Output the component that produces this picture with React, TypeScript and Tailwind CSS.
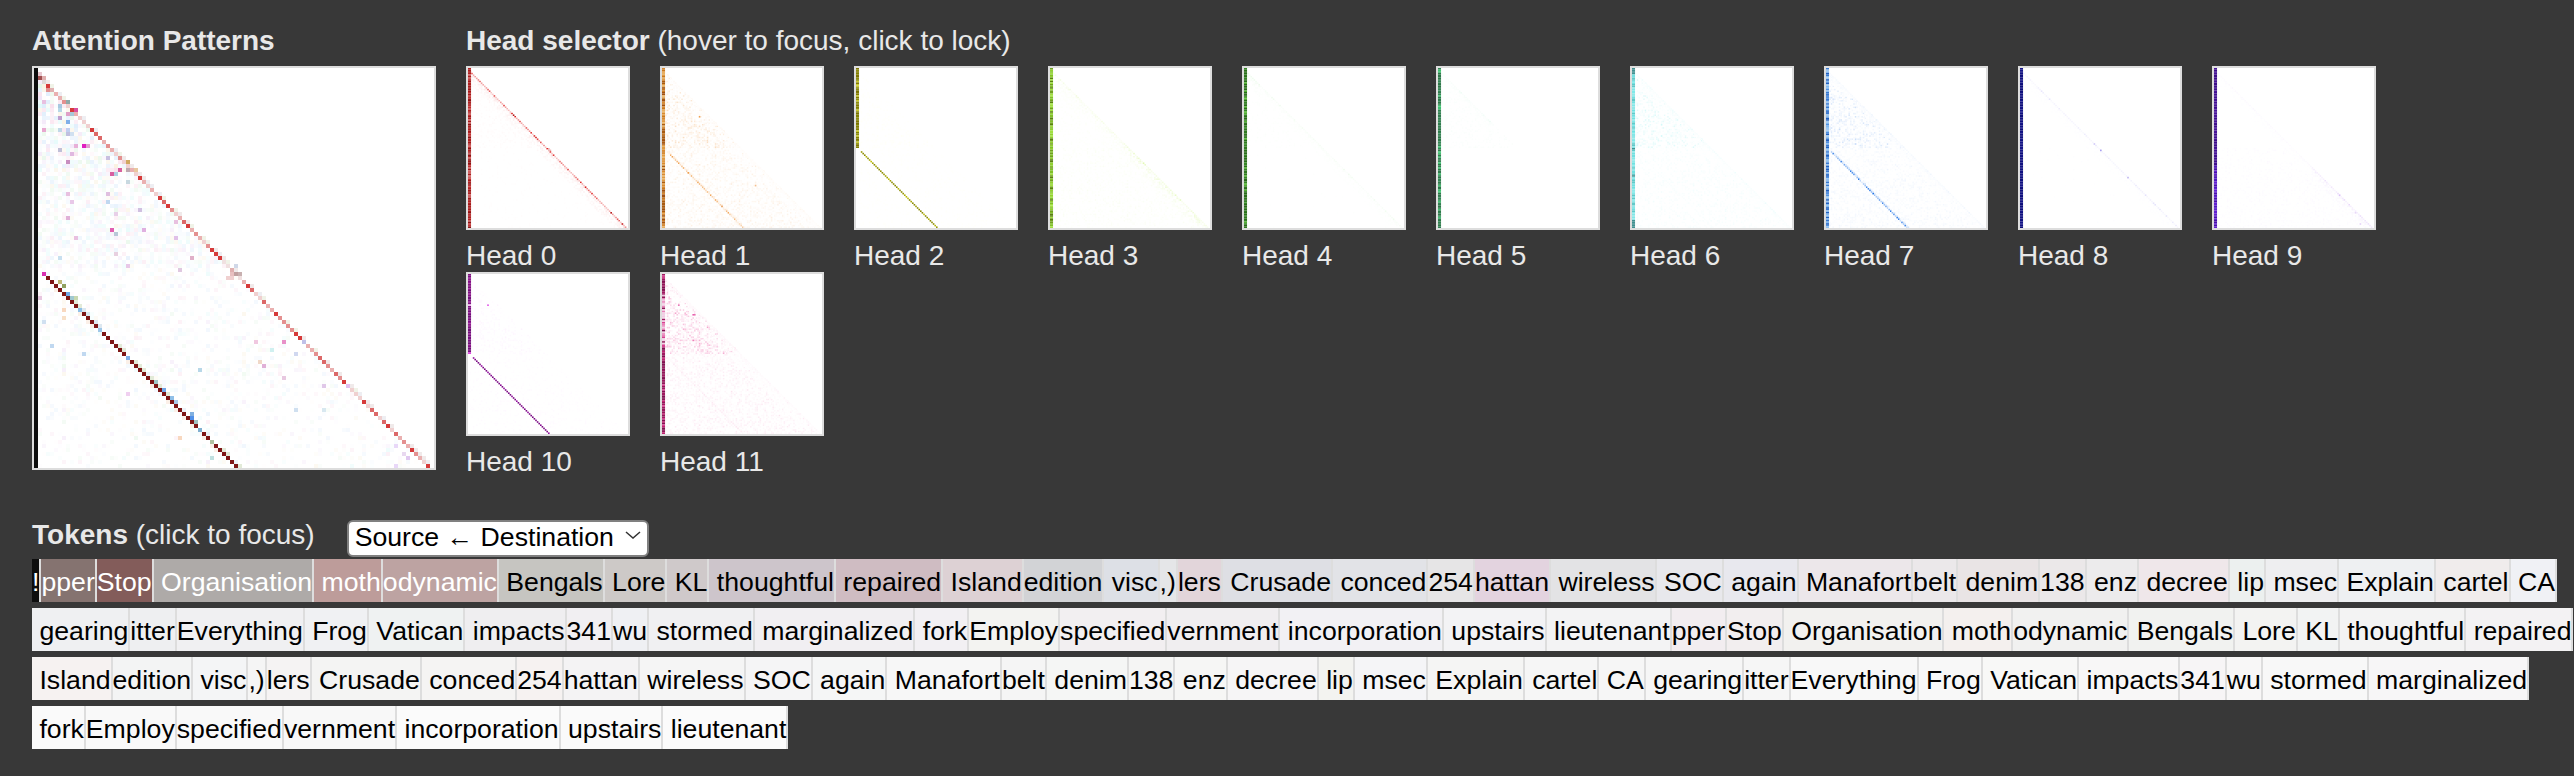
import React from "react";

function rng(seed: number) {
  let a = seed >>> 0;
  return () => {
    a = (a + 0x6d2b79f5) >>> 0;
    let t = a;
    t = Math.imul(t ^ (t >>> 15), t | 1);
    t ^= t + Math.imul(t ^ (t >>> 7), t | 61);
    return ((t ^ (t >>> 14)) >>> 0) / 4294967296;
  };
}

type Cell = [number, number, string];

const STRONG = [3, 9, 14, 26, 31, 33, 38, 44, 45, 46, 53, 60, 65, 66, 77, 82, 88, 94, 98];

const NOTABLE: Cell[] = [
  [1, 1, "#e8c8d0"], [1, 2, "#a05050"], [2, 2, "#e0b0b0"], [2, 3, "#e0d8d8"], [3, 5, "#e09090"], [4, 5, "#e0b0b0"],
  [8, 8, "#90a8a8"], [2, 8, "#e8c0e0"], [2, 15, "#e8a8d0"], [6, 9, "#a8c8e0"], [6, 10, "#b8d8e8"], [8, 11, "#e0a0c8"],
  [9, 11, "#a8c8d8"], [10, 10, "#d850a0"], [6, 12, "#c0a0d0"], [8, 13, "#80b0e8"], [6, 15, "#c0d8e8"], [8, 15, "#c0d0f0"],
  [8, 16, "#c0c0e0"], [9, 16, "#d0e0f0"], [12, 19, "#e020c0"], [13, 19, "#e0a0d0"], [10, 19, "#e8b0d8"], [6, 20, "#c0c0d8"],
  [9, 21, "#e0b8e0"], [18, 22, "#c8c0e0"], [8, 23, "#c88ec0"], [23, 23, "#d0a860"], [23, 25, "#c0a8b0"], [25, 25, "#e8c8a0"],
  [21, 25, "#d860a0"], [19, 26, "#d860a0"], [20, 26, "#b0d0e0"], [23, 28, "#c8d8e0"], [8, 31, "#e8c0e0"], [9, 33, "#e8c8e8"],
  [18, 31, "#e0c0e0"], [18, 33, "#c0d8f0"], [26, 35, "#d0c0e0"], [8, 37, "#e0b0d8"], [20, 36, "#e8d0e8"], [35, 38, "#e8c0e0"],
  [19, 40, "#e060b0"], [20, 41, "#b8c8d8"], [27, 40, "#e0b0e0"], [10, 42, "#e8c0e0"], [35, 42, "#e0c0e8"], [6, 47, "#c8e0f0"],
  [20, 46, "#e8d0e0"], [39, 47, "#e0b0c8"], [23, 49, "#e8c8e8"], [36, 50, "#e0c8e0"], [49, 50, "#e0b0b0"], [50, 51, "#c0a0a0"],
  [49, 51, "#e8c0c0"], [51, 51, "#c8b0b0"], [48, 52, "#f0d0d0"], [49, 52, "#f0d0d0"], [50, 49, "#d0d8e8"], [1, 57, "#e8c8e0"],
  [7, 60, "#f8d8c0"], [7, 62, "#f8e0c8"], [2, 63, "#d0e0f0"], [4, 69, "#c0d8f0"], [12, 71, "#c0d8f0"], [55, 68, "#f0c8e0"],
  [62, 68, "#e890c8"], [67, 68, "#c0c0e8"], [65, 71, "#d0d8f0"], [59, 70, "#d0f0f0"], [57, 74, "#e0b0d8"], [56, 73, "#f0d8c8"],
  [41, 75, "#b8d8e8"], [62, 77, "#e8c8e0"], [23, 81, "#f0d0f0"], [65, 85, "#d0e0f0"], [72, 85, "#d8e8f0"], [36, 92, "#f8d8c0"],
  [44, 97, "#c0e0e0"], [72, 79, "#e0c8e8"], [93, 97, "#e0c8f0"], [90, 99, "#e8d8f8"], [90, 94, "#e8d8f8"], [92, 96, "#e8d8f0"],
  [78, 79, "#e0c0f0"], [2, 51, "#d830b0"], [8, 56, "#70a8e8"], [9, 57, "#a0c8d0"], [11, 60, "#90c0e8"], [16, 65, "#a0c8e8"],
  [23, 72, "#80b0e8"], [32, 80, "#70a8e8"], [34, 82, "#90c0e8"], [39, 87, "#5090e8"], [39, 86, "#80b0e0"], [40, 88, "#a0c0c0"],
  [41, 90, "#80b0d0"], [35, 83, "#a8c8e8"], [7, 54, "#90a060"], [6, 53, "#c0b878"], [44, 93, "#b0c0a0"], [30, 78, "#a0c8c8"],
  [10, 57, "#c8d8b0"],
];

function bigCells(): Cell[] {
  const R = rng(11);
  const out: Cell[] = [];
  const tints = [[330, 70], [210, 80], [210, 80], [130, 50], [40, 70], [280, 55], [180, 70]];
  for (let r = 1; r < 100; r++) {
    for (let c = 1; c < r; c++) {
      const upper = r < 50;
      let d = upper ? 0.8 : 0.4;
      if (!upper && r > 85) d = 0.28;
      if (R() > d) continue;
      const t = tints[Math.floor(R() * tints.length)];
      let amp = upper ? 3.6 + 6 * Math.max(0, 1 - r / 30) : 2.4;
      if (r > 50 && (c % 9 === 7 || c === 36)) amp += 1.5;
      if (c === 23 || c === 20) amp += upper ? 2 : 0;
      const l = 100 - R() * amp;
      out.push([c, r, `hsl(${t[0]} ${t[1]}% ${l.toFixed(1)}%)`]);
    }
  }
  for (let c = 1; c < 99; c++) {
    const v = R();
    const col = STRONG.includes(c)
      ? "#d63a3a"
      : c > 46 && c < 52
        ? "#f0e0e0"
        : v < 0.35
          ? "#f0d0d0"
          : v < 0.6
            ? "#eab0b0"
            : v < 0.85
              ? "#e49090"
              : "#dc6868";
    out.push([c, c + 1, col]);
    const w = R();
    if (w < 0.55) out.push([c + 1, c + 1, w < 0.2 ? "#f0eaea" : w < 0.4 ? "#f0f3e8" : "#eeeef2"]);
  }
  for (let c = 3; c <= 50; c++) {
    out.push([c, c + 49, "#7e1616"]);
    const w = R();
    if (w < 0.65) out.push([c + 1, c + 49, w < 0.3 ? "#e2ead8" : w < 0.5 ? "#ecf2f8" : "#dde8f0"]);
    if (R() < 0.25) out.push([c - 1, c + 49, "#fbf0e8"]);
  }
  out.push(...NOTABLE);
  for (let r = 0; r < 100; r++) out.push([0, r, "#0d0d0d"]);
  return out;
}

type HeadSpec = {
  hue: number;
  sat: number;
  col: (r: number, R: () => number) => string;
  cut?: boolean;
  main: number;
  mainWidth: number;
  second: number;
  upper: number;
  lower: number;
  mainFade?: (c: number) => number;
  extras?: Cell[];
};

const pick = (R: () => number, list: string[]) => list[Math.floor(R() * list.length)];

const HEADS: HeadSpec[] = [
  { hue: 0, sat: 75, main: 0.5, mainWidth: 0.12, second: 0, upper: 0.008, lower: 0.003,
    col: (_, R) => pick(R, ["#a01818", "#b02020", "#8a1212", "#c03030", "#a81c1c", "#d06060"]),
    extras: [[50, 50, "#e8a8a8"], [51, 51, "#e8b0b0"], [50, 51, "#ecb8b8"], [89, 90, "#b82020"], [96, 97, "#c83030"]] },
  { hue: 30, sat: 85, main: 0.02, mainWidth: 0.015, second: 0.36, upper: 0.07, lower: 0.035,
    col: (_, R) => pick(R, ["#a85a10", "#e09a40", "#c87820", "#e8b060", "#a05010", "#d88a30"]),
    extras: [[23, 30, "#f0a050"], [16, 65, "#f0a050"], [58, 73, "#f4c090"], [37, 86, "#e8a060"]] },
  { hue: 60, sat: 95, main: 0, mainWidth: 0.004, second: 1, upper: 0.01, lower: 0.006, cut: true,
    col: (_, R) => pick(R, ["#808000", "#807800", "#8c8c10", "#c8c830", "#787000"]) },
  { hue: 80, sat: 85, main: 0.08, mainWidth: 0.1, second: 0, upper: 0.008, lower: 0.012,
    col: (_, R) => pick(R, ["#70a020", "#90d030", "#a0e040", "#588010", "#80c028"]),
    mainFade: (c) => (c > 45 ? 1.5 : 0.7) },
  { hue: 115, sat: 70, main: 0.03, mainWidth: 0.02, second: 0, upper: 0.004, lower: 0.002,
    col: (_, R) => pick(R, ["#307820", "#287018", "#50b030", "#358525", "#2a6a1a"]),
    mainFade: (c) => (c < 10 ? 2.5 : 1) },
  { hue: 150, sat: 65, main: 0.015, mainWidth: 0.012, second: 0, upper: 0.008, lower: 0.001,
    col: (_, R) => pick(R, ["#308050", "#2c7848", "#40c070", "#307a4c", "#358555"]),
    mainFade: (c) => (c < 35 ? 2 : 0) },
  { hue: 180, sat: 75, main: 0.03, mainWidth: 0.02, second: 0.015, upper: 0.05, lower: 0.014,
    col: (r, R) => (r < 4 || r > 94 || r === 67 || r === 50 ? "#409090" : pick(R, ["#70e0e0", "#80e8e8", "#60c8c8", "#90e8e8"])) },
  { hue: 215, sat: 80, main: 0.03, mainWidth: 0.02, second: 0.5, upper: 0.06, lower: 0.018,
    col: (_, R) => pick(R, ["#2060c0", "#80b8f0", "#5090e0", "#a0c8f0", "#3878d0", "#90c0f0"]) },
  { hue: 245, sat: 80, main: 0.05, mainWidth: 0.012, second: 0, upper: 0.001, lower: 0.002,
    col: (_, R) => pick(R, ["#101080", "#0c0c78", "#141488", "#101080"]),
    extras: [[50, 51, "#a8a0f0"], [46, 47, "#d0c8f8"], [67, 68, "#c0b8f0"]] },
  { hue: 270, sat: 80, main: 0.03, mainWidth: 0.02, second: 0, upper: 0.001, lower: 0.006,
    col: (r, R) => (r > 60 ? pick(R, ["#5018c0", "#6020d0", "#4810a8"]) : pick(R, ["#401090", "#3c0c88", "#481498"])),
    mainFade: (c) => (c > 60 ? 3 : 0.5),
    extras: [[78, 79, "#dcc0f8"], [91, 97, "#e4d0f8"], [88, 90, "#e8d8f8"]] },
  { hue: 295, sat: 85, main: 0, mainWidth: 0.006, second: 1.05, upper: 0.012, lower: 0.006, cut: true,
    col: (r, R) => (r === 49 ? "#e040e0" : r === 19 ? "#f0c0f0" : pick(R, ["#801080", "#701078", "#901890", "#781080"])),
    extras: [[12, 19, "#e050e8"]] },
  { hue: 330, sat: 80, main: 0.02, mainWidth: 0.02, second: 0.06, upper: 0.1, lower: 0.028,
    col: (r, R) =>
      r > 12 && r < 44 && r % 7 !== 0
        ? pick(R, ["#f0c8e0", "#e880b8", "#f0d0e4", "#d84090"])
        : pick(R, ["#901858", "#c02070", "#a01860", "#801050", "#d84090"]),
    extras: [[19, 25, "#e860b0"], [10, 19, "#e878b8"], [20, 25, "#e870b0"], [19, 41, "#ee80b8"]] },
];

function headCells(spec: HeadSpec, idx: number): Cell[] {
  const R = rng(100 + idx * 17);
  const out: Cell[] = [];
  const tint = (v: number) => `hsl(${spec.hue} ${spec.sat}% ${(100 - Math.min(v, 1) * 72).toFixed(1)}%)`;
  for (let r = 1; r < 100; r++) {
    for (let c = 1; c < r; c++) {
      const amt = r < 50 ? spec.upper : spec.lower;
      if (R() > 0.65) continue;
      const col = c % 5 === 3 ? 1.4 : 1;
      const v = R() * R() * amt * col * 2.2;
      if (v > 0.004) out.push([c, r, tint(v)]);
    }
  }
  for (let c = 1; c < 99; c++) {
    const f = spec.mainFade ? spec.mainFade(c) : 1;
    const v = spec.main * f * (0.35 + R() * R() * 1.6);
    if (v > 0.004) out.push([c, c + 1, tint(v)]);
    const w = spec.mainWidth * f;
    for (let k = 2; k < 9; k++) {
      if (c + k < 100 && R() < 0.6) out.push([c, c + k, tint((w * R()) / (k * 0.55))]);
    }
  }
  if (spec.second > 0) {
    for (let c = 3; c <= 50; c++) {
      const jitter = spec.second < 0.6 ? 0.2 + R() * 1.2 : 0.85 + R() * 0.3;
      out.push([c, c + 49, tint(spec.second * jitter)]);
      if (spec.second < 0.6) out.push([c + 1, c + 49, tint(spec.second * 0.3 * R())]);
    }
  }
  if (spec.extras) out.push(...spec.extras);
  const last = spec.cut ? 50 : 100;
  for (let r = 0; r < last; r++) out.push([0, r, spec.col(r, R)]);
  return out;
}

function Heatmap({ cells, size, crisp }: { cells: Cell[]; size: string; crisp?: boolean }) {
  return (
    <div className={`${size} box-content border-2 border-[#dddddd] bg-white shrink-0`}>
      <svg viewBox="0 0 100 100" className="block w-full h-full" shapeRendering={crisp ? "crispEdges" : "auto"}>
        {cells.map(([c, r, f], i) => (
          <rect key={i} x={c} y={r} width={!crisp && c === 0 ? 1.9 : 1} height={1} fill={f} />
        ))}
      </svg>
    </div>
  );
}

type Tok = [string, string, boolean?];

const ROW1: Tok[] = [
  ["!", "#0d0d0d", true], ["pper", "#857370", true], ["Stop", "#835c5a", true], [" Organisation", "#aeaaa8", true],
  [" moth", "#bd9c9a", true], ["odynamic", "#bda3a2", true], [" Bengals", "#c6c5c1"], [" Lore", "#cdc9c7"], [" KL", "#cfc9ca"],
  [" thoughtful", "#cdc5cb"], [" repaired", "#cfbcc2"], [" Island", "#ddd1d4"], ["edition", "#d2d3d6"], [" visc", "#dde0e6"],
  [",)", "#e5e6e8"], ["lers", "#e2d5da"], [" Crusade", "#dedfe4"], [" conced", "#e2e3e7"], ["254", "#e6e5e6"], ["hattan", "#e3d3df"],
  [" wireless", "#e3e3e5"], [" SOC", "#e8e8ec"], [" again", "#e8e8ee"], [" Manafort", "#ece7ea"], ["belt", "#ebe8ea"], [" denim", "#e9e4e5"],
  ["138", "#ebe8e9"], [" enz", "#ecebec"], [" decree", "#efe7ea"], [" lip", "#ecf0ef"], [" msec", "#eeeef0"], [" Explain", "#eef0f2"],
  [" cartel", "#f0ecec"], [" CA", "#f0f1f5"],
];
const ROW2: Tok[] = [
  [" gearing", "#eff0f2"], ["itter", "#eeeff1"], ["Everything", "#f0f0f2"], [" Frog", "#f0f1f3"], [" Vatican", "#eff2f2"], [" impacts", "#efeef0"],
  ["341", "#f1eff2"], ["wu", "#eff0f3"], [" stormed", "#f0f0f2"], [" marginalized", "#f1eff2"], [" fork", "#f2f0f3"], ["Employ", "#f3f3f1"],
  ["specified", "#f2eff1"], ["vernment", "#f0eef0"], [" incorporation", "#f2f1f4"], [" upstairs", "#f3f3f5"], [" lieutenant", "#f3f3f4"],
  ["pper", "#f2edf0"], ["Stop", "#f2eeef"], [" Organisation", "#f2f1ef"], [" moth", "#f4f0ee"], ["odynamic", "#f1f1f0"], [" Bengals", "#f1f2f0"],
  [" Lore", "#f3f3f2"], [" KL", "#f2f3f3"], [" thoughtful", "#f3f3f3"], [" repaired", "#f3f2f3"],
];
const ROW3: Tok[] = [
  [" Island", "#f6f2f1"], ["edition", "#f3f4f4"], [" visc", "#f4f5f6"], [",)", "#f5f5f5"], ["lers", "#f5f3f3"], [" Crusade", "#f4f4f3"], [" conced", "#f5f4f3"],
  ["254", "#f6f2f1"], ["hattan", "#f4f3f4"], [" wireless", "#f5f5f5"], [" SOC", "#f5f5f6"], [" again", "#f5f6f6"], [" Manafort", "#f7f7f7"], ["belt", "#f5f5f5"],
  [" denim", "#f5f6f5"], ["138", "#f5f5f4"], [" enz", "#f6f6f5"], [" decree", "#f6f5f6"], [" lip", "#f3f3f0"], [" msec", "#f5f5f7"], [" Explain", "#f5f5f4"],
  [" cartel", "#f6f6f6"], [" CA", "#f6f6f6"], [" gearing", "#f6f6f6"], ["itter", "#f6f6f6"], ["Everything", "#f8f8f8"], [" Frog", "#f8f8f8"], [" Vatican", "#f8f8f7"],
  [" impacts", "#f8f7f7"], ["341", "#f7f5f6"], ["wu", "#f8f7f7"], [" stormed", "#f8f8f8"], [" marginalized", "#f7f6f7"],
];
const ROW4: Tok[] = [
  [" fork", "#fafafa"], ["Employ", "#f9f9f9"], ["specified", "#f9f9f9"], ["vernment", "#f8f8f8"], [" incorporation", "#fbfbfb"], [" upstairs", "#fafafa"], [" lieutenant", "#fbfbfb"],
];

function Token({ t }: { t: Tok }) {
  return (
    <span
      className={`whitespace-pre h-[43px] leading-[46px] text-[26.67px] border-r-2 border-[#dddddd] ${t[2] ? "text-white" : "text-black"}`}
      style={{ backgroundColor: t[1] }}
    >
      {t[0]}
    </span>
  );
}

const big = bigCells();
const heads = HEADS.map(headCells);

export default function App() {
  return (
    <div
      className="w-[2574px] h-[776px] overflow-hidden bg-[#383838] text-[#e8e8e8] text-[28px] pl-[32px] pt-[20px]"
      style={{ fontFamily: '"Liberation Sans", Arial, sans-serif' }}
    >
      <div className="flex gap-[30px]">
        <div className="w-[404px] shrink-0">
          <div className="h-[46px] leading-[42px] font-bold whitespace-nowrap">Attention Patterns</div>
          <Heatmap cells={big} size="w-[400px] h-[400px]" crisp />
        </div>
        <div className="w-[1910px]">
          <div className="h-[46px] leading-[42px] whitespace-nowrap">
            <span className="font-bold">Head selector</span> (hover to focus, click to lock)
          </div>
          <div className="flex flex-wrap gap-x-[30px]">
            {heads.map((cells, i) => (
              <div key={i} className="w-[164px] h-[206px]">
                <Heatmap cells={cells} size="w-[160px] h-[160px]" />
                <div className="h-[42px] leading-[52px] whitespace-nowrap">Head {i}</div>
              </div>
            ))}
          </div>
        </div>
      </div>
      <div className="flex items-center h-[37px] mt-[38px] whitespace-nowrap">
        <span>
          <span className="font-bold">Tokens</span> (click to focus)
        </span>
        <div className="relative ml-[32px] w-[302px] h-[37px]">
          <select className="w-full h-full appearance-none bg-white text-black border-2 border-[#808080] rounded-[6px] pl-[6px] pb-[3px] text-[26.67px] leading-[30px]">
            <option>Source ← Destination</option>
          </select>
          <svg className="absolute right-[8px] top-[15px] pointer-events-none" width="16" height="8" viewBox="0 0 16 8" fill="none" stroke="#333333" strokeWidth="1.5">
            <path d="M1 1 L8 7 L15 1" />
          </svg>
        </div>
      </div>
      <div className="flex flex-col gap-[6px] mt-[6px] w-[2542px]">
        {[ROW1, ROW2, ROW3, ROW4].map((row, i) => (
          <div key={i} className="flex">
            {row.map((t, j) => (
              <Token key={j} t={t} />
            ))}
          </div>
        ))}
      </div>
    </div>
  );
}
